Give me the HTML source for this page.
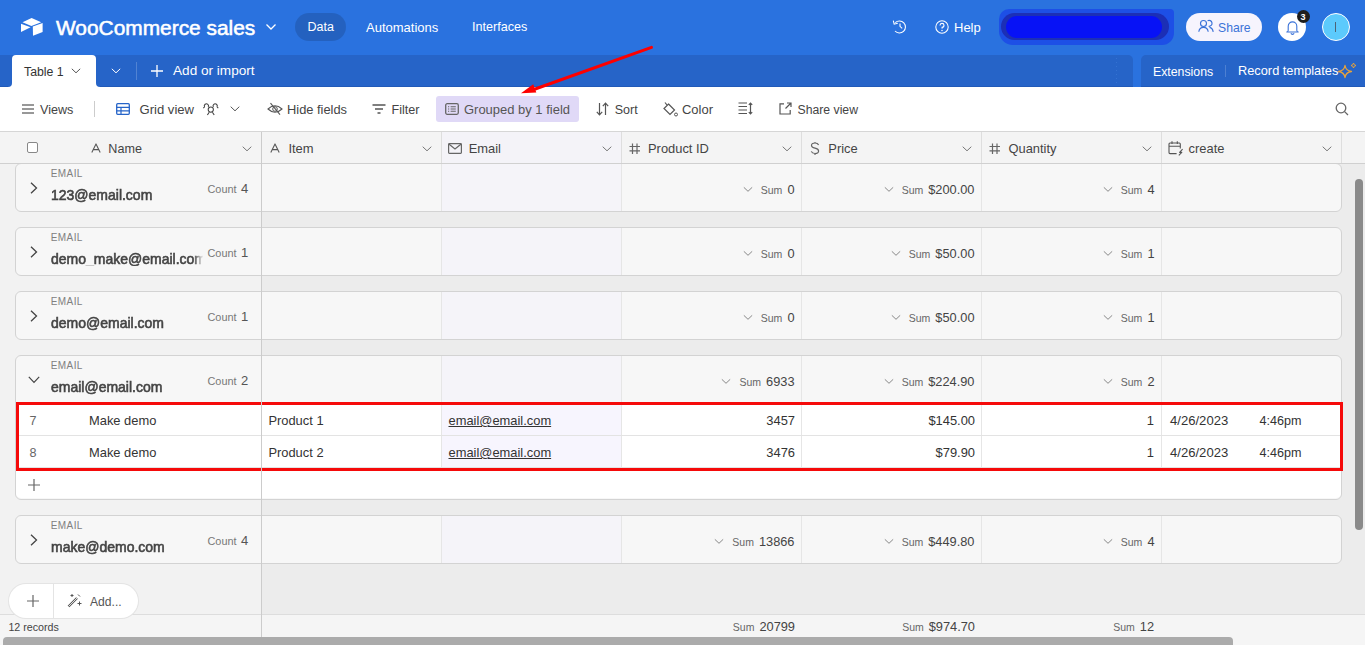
<!DOCTYPE html>
<html><head><meta charset="utf-8"><style>
html,body{margin:0;padding:0;}
body{width:1365px;height:645px;overflow:hidden;position:relative;font-family:"Liberation Sans", sans-serif;background:#fff;}
.t{position:absolute;line-height:1;white-space:nowrap;}
.b{position:absolute;}
.sum{display:flex;align-items:baseline;}
</style></head><body>
<div class="b" style="left:0px;top:0px;width:1365px;height:54px;background:#2a72df"></div>
<svg class="b" style="left:16px;top:12px;" width="32" height="28" viewBox="0 0 32 28"><path d="M6.5 10.2 L15.6 6 L25.2 10.2 L15.4 14 Z" fill="#fff"/><path d="M5 11.8 L14.6 15.3 L5 19.9 Z" fill="#fff"/><path d="M16.8 14.6 L26.6 11 L26.6 20 L17 23.8 Z" fill="#fff"/></svg>
<div class="t" style="left:56px;top:18.31px;font-size:20.9px;color:#fff;font-weight:normal;-webkit-text-stroke:0.55px #fff">WooCommerce sales</div>
<svg class="b" style="left:266px;top:24px;" width="10" height="6" viewBox="0 0 10 6"><path d="M0.5 0.5 L5 5 L9.5 0.5" stroke="#fff" stroke-width="1.3" fill="none"/></svg>
<div class="b" style="left:295px;top:13px;width:51px;height:28px;background:rgba(0,0,0,0.14);border-radius:14px"></div>
<div class="t" style="left:307.5px;top:21.42px;font-size:12.5px;color:#fff;font-weight:normal;">Data</div>
<div class="t" style="left:366px;top:21.00px;font-size:13px;color:#fff;font-weight:normal;">Automations</div>
<div class="t" style="left:472px;top:21.33px;font-size:12.6px;color:#fff;font-weight:normal;">Interfaces</div>
<svg class="b" style="left:890px;top:17px;" width="18" height="18" viewBox="0 0 18 18"><path d="M5.3 5.6 A6 6 0 1 1 5 14" stroke="#fff" stroke-width="1.1" fill="none"/><path d="M3.3 3.6 L4.2 7.2 L7.8 6.3" stroke="#fff" stroke-width="1.1" fill="none"/><path d="M10 6.5 L10 9.3 L12.2 11.3" stroke="#fff" stroke-width="1.1" fill="none"/></svg>
<svg class="b" style="left:934px;top:19px;" width="16" height="16" viewBox="0 0 16 16"><circle cx="8" cy="8" r="6.2" stroke="#fff" stroke-width="1.05" fill="none"/><path d="M6 6.4 A2 2 0 1 1 8.1 8.4 L8 9.6" stroke="#fff" stroke-width="1.1" fill="none"/><circle cx="8" cy="11.4" r="0.75" fill="#fff"/></svg>
<div class="t" style="left:954px;top:21.00px;font-size:13px;color:#fff;font-weight:normal;">Help</div>
<div class="b" style="left:999px;top:9px;width:175px;height:36px;background:#1d4fe6;border-radius:10px 4px 12px 14px"></div>
<div class="b" style="left:1001px;top:13px;width:168px;height:27px;background:#1c2fb6;border-radius:14px"></div>
<div class="b" style="left:1006px;top:15.5px;width:156px;height:22px;background:#0712f6;border-radius:11px"></div>
<div class="b" style="left:1186px;top:13px;width:76px;height:28px;background:#f6f4fd;border-radius:14px"></div>
<svg class="b" style="left:1198px;top:19px;" width="18" height="14" viewBox="0 0 18 14"><circle cx="5.5" cy="4.5" r="3" stroke="#3a72d8" stroke-width="1.15" fill="none"/><path d="M0.8 12.8 C1.2 9.6 3 8.3 5.5 8.3 C8 8.3 9.8 9.6 10.2 12.8" stroke="#3a72d8" stroke-width="1.15" fill="none"/><path d="M9.6 1.7 A3 3 0 1 1 10.6 7.3" stroke="#3a72d8" stroke-width="1.15" fill="none"/><path d="M11.5 8.4 C13.6 8.8 14.8 10.2 15.2 12.8" stroke="#3a72d8" stroke-width="1.15" fill="none"/></svg>
<div class="t" style="left:1218px;top:21.67px;font-size:12.2px;color:#3a72d8;font-weight:normal;">Share</div>
<div class="b" style="left:1278px;top:13px;width:28px;height:28px;background:#fff;border-radius:50%"></div>
<svg class="b" style="left:1286px;top:20px;" width="13" height="15" viewBox="0 0 13 15"><path d="M2.2 10.5 L2.2 6.2 A4.3 4.3 0 0 1 10.8 6.2 L10.8 10.5 Q11 11.5 12.2 12 L0.8 12 Q2 11.5 2.2 10.5 Z" stroke="#3a72d8" stroke-width="1.1" fill="none" stroke-linejoin="round"/><path d="M4.9 13.2 A1.7 1.7 0 0 0 8.1 13.2" stroke="#3a72d8" stroke-width="1.1" fill="none"/></svg>
<div class="b" style="left:1297px;top:10px;width:13px;height:13px;background:#1e1e1e;border-radius:50%"></div>
<div class="t" style="left:1300.5px;top:12.88px;font-size:9px;color:#fff;font-weight:bold;">3</div>
<div class="b" style="left:1322px;top:13px;width:28px;height:28px;background:#5ccafc;border-radius:50%;box-sizing:border-box;border:1px solid #fff"></div>
<div class="b" style="left:1335px;top:22px;width:1px;height:10px;background:#4d6375"></div>
<div class="b" style="left:0px;top:54px;width:1365px;height:1px;background:#2a72df"></div>
<div class="b" style="left:1110px;top:54px;width:50px;height:33px;background:#2a72df"></div>
<div class="b" style="left:0px;top:55px;width:1120px;height:20px;background:#2664c8"></div>
<div class="b" style="left:0px;top:55px;width:12px;height:32px;background:#2664c8;border-bottom-right-radius:4px"></div>
<div class="b" style="left:96px;top:55px;width:1037px;height:32px;background:#2664c8;border-top-right-radius:5px;border-bottom-left-radius:4px"></div>
<div class="b" style="left:1141px;top:55px;width:224px;height:32px;background:#2664c8;border-top-left-radius:5px"></div>
<div class="b" style="left:0px;top:86px;width:8px;height:1px;background:#215ab8"></div>
<div class="b" style="left:100px;top:86px;width:1033px;height:1px;background:#215ab8"></div>
<div class="b" style="left:1141px;top:86px;width:224px;height:1px;background:#215ab8"></div>
<div class="b" style="left:1116px;top:58px;width:1px;height:28px;background:repeating-linear-gradient(rgba(80,140,230,0.35) 0 1px, transparent 1px 4px)"></div>
<div class="b" style="left:12px;top:55px;width:84px;height:33px;background:#fff;border-top-left-radius:4px;border-top-right-radius:4px"></div>
<div class="t" style="left:24px;top:65.59px;font-size:12.3px;color:#333;font-weight:normal;">Table 1</div>
<svg class="b" style="left:71px;top:68px;" width="10" height="6" viewBox="0 0 10 6"><path d="M0.8 0.8 L5 4.8 L9.2 0.8" stroke="#555" stroke-width="1" fill="none"/></svg>
<svg class="b" style="left:111px;top:68px;" width="10" height="6" viewBox="0 0 10 6"><path d="M0.8 0.8 L5 4.8 L9.2 0.8" stroke="#fff" stroke-width="1" fill="none"/></svg>
<div class="b" style="left:136px;top:62px;width:1px;height:18px;background:rgba(255,255,255,0.2)"></div>
<svg class="b" style="left:151px;top:65px;" width="12" height="12" viewBox="0 0 12 12"><path d="M6 0 L6 12 M0 6 L12 6" stroke="#fff" stroke-width="1.3"/></svg>
<div class="t" style="left:173px;top:64.49px;font-size:13.6px;color:#fff;font-weight:normal;">Add or import</div>
<div class="t" style="left:1153px;top:65.59px;font-size:12.3px;color:#fff;font-weight:normal;">Extensions</div>
<div class="b" style="left:1225px;top:65px;width:1px;height:12px;background:rgba(255,255,255,0.18)"></div>
<div class="t" style="left:1238px;top:65.16px;font-size:12.8px;color:#fff;font-weight:normal;">Record templates</div>
<svg class="b" style="left:1336px;top:60px;" width="24" height="20" viewBox="0 0 24 20"><path d="M9 5.5 Q9.8 10.8 15.5 11.5 Q9.8 12.2 9 17.5 Q8.2 12.2 2.5 11.5 Q8.2 10.8 9 5.5 Z" stroke="#e8a33a" stroke-width="1.3" fill="none" stroke-linejoin="round"/><path d="M17.5 3 Q17.8 5.2 20 5.5 Q17.8 5.8 17.5 8 Q17.2 5.8 15 5.5 Q17.2 5.2 17.5 3 Z" stroke="#e8a33a" stroke-width="1" fill="none"/></svg>
<div class="b" style="left:0px;top:87px;width:1365px;height:44px;background:#fff"></div>
<div class="b" style="left:0px;top:131px;width:1365px;height:1px;background:#d6d6d6"></div>
<svg class="b" style="left:22px;top:103px;" width="12" height="12" viewBox="0 0 12 12"><path d="M0 2 L12 2 M0 6 L12 6 M0 10 L12 10" stroke="#777" stroke-width="1.5"/></svg>
<div class="t" style="left:40px;top:104.33px;font-size:12.6px;color:#444;font-weight:normal;">Views</div>
<div class="b" style="left:94px;top:101px;width:1px;height:16px;background:#ccc"></div>
<svg class="b" style="left:116px;top:103px;" width="14" height="12" viewBox="0 0 14 12"><rect x="0.7" y="0.7" width="12.6" height="10.6" rx="1" stroke="#2664c8" stroke-width="1.3" fill="none"/><path d="M0.7 4.3 L13.3 4.3 M0.7 7.8 L13.3 7.8 M5 4.3 L5 11.3" stroke="#2664c8" stroke-width="1.2"/></svg>
<div class="t" style="left:139.5px;top:103.31px;font-size:13.1px;color:#444;font-weight:normal;">Grid view</div>
<svg class="b" style="left:202px;top:102px;" width="18" height="15" viewBox="0 0 18 15"><circle cx="8.8" cy="7.6" r="2.6" stroke="#444" stroke-width="1.05" fill="none"/><path d="M7.2 10.3 L5.4 13 M10.4 10.3 L12.2 13" stroke="#444" stroke-width="1.1"/><path d="M2.6 4.9 A2.1 2.1 0 1 1 6.2 5 M2.6 4.9 L1.3 6.1 M11.4 5 A2.1 2.1 0 1 1 15 4.9 M15 4.9 L16.3 6.1" stroke="#444" stroke-width="1.05" fill="none"/></svg>
<svg class="b" style="left:230px;top:106px;" width="10" height="6" viewBox="0 0 10 6"><path d="M0.7 0.7 L5 4.8 L9.3 0.7" stroke="#555" stroke-width="1" fill="none"/></svg>
<svg class="b" style="left:267px;top:102px;" width="16" height="14" viewBox="0 0 16 14"><path d="M1 7 Q8 0.5 15 7 Q8 13.5 1 7 Z" stroke="#555" stroke-width="1.05" fill="none"/><circle cx="8" cy="7" r="2.3" stroke="#555" stroke-width="1" fill="none"/><path d="M3.5 1.2 L13 12.6" stroke="#555" stroke-width="1.1"/></svg>
<div class="t" style="left:287px;top:104.12px;font-size:12.85px;color:#444;font-weight:normal;">Hide fields</div>
<svg class="b" style="left:372px;top:104px;" width="14" height="10" viewBox="0 0 14 10"><path d="M0.5 1 L13.5 1 M3 5 L11 5 M5.5 9 L8.5 9" stroke="#555" stroke-width="1.3"/></svg>
<div class="t" style="left:391.5px;top:104.33px;font-size:12.6px;color:#444;font-weight:normal;">Filter</div>
<div class="b" style="left:436px;top:96px;width:143px;height:26px;background:#e0d9f7;border-radius:3px"></div>
<svg class="b" style="left:445px;top:103px;" width="14" height="12" viewBox="0 0 14 12"><rect x="0.7" y="0.7" width="12.6" height="10.6" rx="1.5" stroke="#666" stroke-width="1.3" fill="none"/><path d="M3 3.8 L4.2 3.8 M5.6 3.8 L10.8 3.8 M3 6 L4.2 6 M5.6 6 L10.8 6 M3 8.2 L4.2 8.2 M5.6 8.2 L10.8 8.2" stroke="#666" stroke-width="1.05"/></svg>
<div class="t" style="left:464px;top:104.02px;font-size:12.97px;color:#555;font-weight:normal;">Grouped by 1 field</div>
<svg class="b" style="left:596px;top:102px;" width="13" height="14" viewBox="0 0 13 14"><path d="M3.5 1 L3.5 12.5 M0.8 9.8 L3.5 12.8 L6.2 9.8 M9.5 13 L9.5 1.5 M6.8 4.2 L9.5 1.2 L12.2 4.2" stroke="#555" stroke-width="1.2" fill="none"/></svg>
<div class="t" style="left:614.7px;top:104.38px;font-size:12.54px;color:#444;font-weight:normal;">Sort</div>
<svg class="b" style="left:662px;top:101px;" width="16" height="16" viewBox="0 0 16 16"><path d="M3 1.5 L5 4" stroke="#555" stroke-width="1.2"/><path d="M6.5 3 L12.5 9 L8 13.5 L2 7.5 Z" stroke="#555" stroke-width="1.2" fill="none"/><circle cx="14" cy="13.5" r="1.5" stroke="#555" stroke-width="1" fill="none"/></svg>
<div class="t" style="left:682px;top:104.02px;font-size:12.97px;color:#444;font-weight:normal;">Color</div>
<svg class="b" style="left:738px;top:102px;" width="15" height="13" viewBox="0 0 15 13"><path d="M0.5 1 L9 1 M0.5 4.5 L9 4.5 M0.5 8 L9 8 M0.5 11.5 L9 11.5 M12.5 1 L12.5 12 M10.8 2.8 L12.5 1 L14.2 2.8 M10.8 10.2 L12.5 12 L14.2 10.2" stroke="#555" stroke-width="1.2" fill="none"/></svg>
<svg class="b" style="left:779px;top:102px;" width="13" height="13" viewBox="0 0 13 13"><path d="M5 1.8 L1 1.8 L1 12 L11.2 12 L11.2 8" stroke="#555" stroke-width="1.2" fill="none"/><path d="M6.5 6.5 L12 1 M8 1 L12 1 L12 5" stroke="#555" stroke-width="1.2" fill="none"/></svg>
<div class="t" style="left:797.6px;top:104.06px;font-size:12.21px;color:#444;font-weight:normal;">Share view</div>
<svg class="b" style="left:1335px;top:102px;" width="14" height="14" viewBox="0 0 14 14"><circle cx="6" cy="6" r="4.8" stroke="#666" stroke-width="1.3" fill="none"/><path d="M9.6 9.6 L13 13" stroke="#666" stroke-width="1.3"/></svg>
<div class="b" style="left:0px;top:132px;width:1365px;height:513px;background:#ececec"></div>
<div class="b" style="left:0px;top:132px;width:261px;height:513px;background:#f2f2f2"></div>
<div class="b" style="left:15px;top:163px;width:1327px;height:49px;background:#f7f7f7;border:1px solid #d3d3d3;border-radius:6px;box-sizing:border-box"></div>
<div class="b" style="left:442px;top:164px;width:179px;height:47px;background:#f5f4f9"></div>
<div class="b" style="left:441px;top:164px;width:1px;height:47px;background:#e6e6e6"></div>
<div class="b" style="left:621px;top:164px;width:1px;height:47px;background:#e6e6e6"></div>
<div class="b" style="left:801px;top:164px;width:1px;height:47px;background:#e6e6e6"></div>
<div class="b" style="left:981px;top:164px;width:1px;height:47px;background:#e6e6e6"></div>
<div class="b" style="left:1161px;top:164px;width:1px;height:47px;background:#e6e6e6"></div>
<svg class="b" style="left:30px;top:182px;" width="8" height="12" viewBox="0 0 8 12"><path d="M1 0.8 L6.5 6 L1 11.2" stroke="#444" stroke-width="1.3" fill="none"/></svg>
<div class="t" style="left:50.8px;top:169.13px;font-size:10px;color:#808080;font-weight:normal;letter-spacing:0.4px">EMAIL</div>
<div class="t" style="left:51px;top:187.53px;font-size:14.5px;color:#444;font-weight:normal;-webkit-text-stroke:0.6px #444;transform:scaleX(0.965);transform-origin:0 0">123@email.com</div>
<div class="t" style="left:207.5px;top:183.77px;font-size:10.9px;color:#777;font-weight:normal;">Count</div>
<div class="t" style="left:241px;top:182.20px;font-size:13px;color:#555;font-weight:normal;">4</div>
<div class="t sum" style="right:570.5px;top:183.80px"><svg width="10" height="6" viewBox="0 0 10 6" style="margin-right:8px;transform:translateY(-1.5px)"><path d="M0.8 0.8 L5 4.8 L9.2 0.8" stroke="#888" stroke-width="1" fill="none"/></svg><span style="font-size:10.5px;color:#666;margin-right:5px">Sum</span><span style="font-size:12.8px;color:#444">0</span></div>
<div class="t sum" style="right:390.5px;top:183.80px"><svg width="10" height="6" viewBox="0 0 10 6" style="margin-right:8px;transform:translateY(-1.5px)"><path d="M0.8 0.8 L5 4.8 L9.2 0.8" stroke="#888" stroke-width="1" fill="none"/></svg><span style="font-size:10.5px;color:#666;margin-right:5px">Sum</span><span style="font-size:12.8px;color:#444">$200.00</span></div>
<div class="t sum" style="right:210.5px;top:183.80px"><svg width="10" height="6" viewBox="0 0 10 6" style="margin-right:8px;transform:translateY(-1.5px)"><path d="M0.8 0.8 L5 4.8 L9.2 0.8" stroke="#888" stroke-width="1" fill="none"/></svg><span style="font-size:10.5px;color:#666;margin-right:5px">Sum</span><span style="font-size:12.8px;color:#444">4</span></div>
<div class="b" style="left:15px;top:227px;width:1327px;height:49px;background:#f7f7f7;border:1px solid #d3d3d3;border-radius:6px;box-sizing:border-box"></div>
<div class="b" style="left:442px;top:228px;width:179px;height:47px;background:#f5f4f9"></div>
<div class="b" style="left:441px;top:228px;width:1px;height:47px;background:#e6e6e6"></div>
<div class="b" style="left:621px;top:228px;width:1px;height:47px;background:#e6e6e6"></div>
<div class="b" style="left:801px;top:228px;width:1px;height:47px;background:#e6e6e6"></div>
<div class="b" style="left:981px;top:228px;width:1px;height:47px;background:#e6e6e6"></div>
<div class="b" style="left:1161px;top:228px;width:1px;height:47px;background:#e6e6e6"></div>
<svg class="b" style="left:30px;top:246px;" width="8" height="12" viewBox="0 0 8 12"><path d="M1 0.8 L6.5 6 L1 11.2" stroke="#444" stroke-width="1.3" fill="none"/></svg>
<div class="t" style="left:50.8px;top:233.13px;font-size:10px;color:#808080;font-weight:normal;letter-spacing:0.4px">EMAIL</div>
<div class="t" style="left:51px;top:251.53px;font-size:14.5px;color:#444;font-weight:normal;-webkit-text-stroke:0.6px #444;overflow:hidden;width:158px;transform:scaleX(0.965);transform-origin:0 0;-webkit-mask-image:linear-gradient(90deg,#000 calc(100% - 10px),transparent)">demo_make@email.com</div>
<div class="t" style="left:207.5px;top:247.77px;font-size:10.9px;color:#777;font-weight:normal;">Count</div>
<div class="t" style="left:241px;top:246.20px;font-size:13px;color:#555;font-weight:normal;">1</div>
<div class="t sum" style="right:570.5px;top:247.80px"><svg width="10" height="6" viewBox="0 0 10 6" style="margin-right:8px;transform:translateY(-1.5px)"><path d="M0.8 0.8 L5 4.8 L9.2 0.8" stroke="#888" stroke-width="1" fill="none"/></svg><span style="font-size:10.5px;color:#666;margin-right:5px">Sum</span><span style="font-size:12.8px;color:#444">0</span></div>
<div class="t sum" style="right:390.5px;top:247.80px"><svg width="10" height="6" viewBox="0 0 10 6" style="margin-right:8px;transform:translateY(-1.5px)"><path d="M0.8 0.8 L5 4.8 L9.2 0.8" stroke="#888" stroke-width="1" fill="none"/></svg><span style="font-size:10.5px;color:#666;margin-right:5px">Sum</span><span style="font-size:12.8px;color:#444">$50.00</span></div>
<div class="t sum" style="right:210.5px;top:247.80px"><svg width="10" height="6" viewBox="0 0 10 6" style="margin-right:8px;transform:translateY(-1.5px)"><path d="M0.8 0.8 L5 4.8 L9.2 0.8" stroke="#888" stroke-width="1" fill="none"/></svg><span style="font-size:10.5px;color:#666;margin-right:5px">Sum</span><span style="font-size:12.8px;color:#444">1</span></div>
<div class="b" style="left:15px;top:291px;width:1327px;height:49px;background:#f7f7f7;border:1px solid #d3d3d3;border-radius:6px;box-sizing:border-box"></div>
<div class="b" style="left:442px;top:292px;width:179px;height:47px;background:#f5f4f9"></div>
<div class="b" style="left:441px;top:292px;width:1px;height:47px;background:#e6e6e6"></div>
<div class="b" style="left:621px;top:292px;width:1px;height:47px;background:#e6e6e6"></div>
<div class="b" style="left:801px;top:292px;width:1px;height:47px;background:#e6e6e6"></div>
<div class="b" style="left:981px;top:292px;width:1px;height:47px;background:#e6e6e6"></div>
<div class="b" style="left:1161px;top:292px;width:1px;height:47px;background:#e6e6e6"></div>
<svg class="b" style="left:30px;top:310px;" width="8" height="12" viewBox="0 0 8 12"><path d="M1 0.8 L6.5 6 L1 11.2" stroke="#444" stroke-width="1.3" fill="none"/></svg>
<div class="t" style="left:50.8px;top:297.14px;font-size:10px;color:#808080;font-weight:normal;letter-spacing:0.4px">EMAIL</div>
<div class="t" style="left:51px;top:315.53px;font-size:14.5px;color:#444;font-weight:normal;-webkit-text-stroke:0.6px #444;transform:scaleX(0.965);transform-origin:0 0">demo@email.com</div>
<div class="t" style="left:207.5px;top:311.77px;font-size:10.9px;color:#777;font-weight:normal;">Count</div>
<div class="t" style="left:241px;top:310.20px;font-size:13px;color:#555;font-weight:normal;">1</div>
<div class="t sum" style="right:570.5px;top:311.80px"><svg width="10" height="6" viewBox="0 0 10 6" style="margin-right:8px;transform:translateY(-1.5px)"><path d="M0.8 0.8 L5 4.8 L9.2 0.8" stroke="#888" stroke-width="1" fill="none"/></svg><span style="font-size:10.5px;color:#666;margin-right:5px">Sum</span><span style="font-size:12.8px;color:#444">0</span></div>
<div class="t sum" style="right:390.5px;top:311.80px"><svg width="10" height="6" viewBox="0 0 10 6" style="margin-right:8px;transform:translateY(-1.5px)"><path d="M0.8 0.8 L5 4.8 L9.2 0.8" stroke="#888" stroke-width="1" fill="none"/></svg><span style="font-size:10.5px;color:#666;margin-right:5px">Sum</span><span style="font-size:12.8px;color:#444">$50.00</span></div>
<div class="t sum" style="right:210.5px;top:311.80px"><svg width="10" height="6" viewBox="0 0 10 6" style="margin-right:8px;transform:translateY(-1.5px)"><path d="M0.8 0.8 L5 4.8 L9.2 0.8" stroke="#888" stroke-width="1" fill="none"/></svg><span style="font-size:10.5px;color:#666;margin-right:5px">Sum</span><span style="font-size:12.8px;color:#444">1</span></div>
<div class="b" style="left:15px;top:355px;width:1327px;height:145px;background:#f7f7f7;border:1px solid #d3d3d3;border-radius:6px;box-sizing:border-box"></div>
<div class="b" style="left:442px;top:356px;width:179px;height:47px;background:#f5f4f9"></div>
<div class="b" style="left:441px;top:356px;width:1px;height:47px;background:#e6e6e6"></div>
<div class="b" style="left:621px;top:356px;width:1px;height:47px;background:#e6e6e6"></div>
<div class="b" style="left:801px;top:356px;width:1px;height:47px;background:#e6e6e6"></div>
<div class="b" style="left:981px;top:356px;width:1px;height:47px;background:#e6e6e6"></div>
<div class="b" style="left:1161px;top:356px;width:1px;height:47px;background:#e6e6e6"></div>
<svg class="b" style="left:28px;top:376px;" width="12" height="8" viewBox="0 0 12 8"><path d="M0.8 0.8 L6 6.3 L11.2 0.8" stroke="#444" stroke-width="1.2" fill="none"/></svg>
<div class="t" style="left:50.8px;top:361.14px;font-size:10px;color:#808080;font-weight:normal;letter-spacing:0.4px">EMAIL</div>
<div class="t" style="left:51px;top:379.53px;font-size:14.5px;color:#444;font-weight:normal;-webkit-text-stroke:0.6px #444;transform:scaleX(0.965);transform-origin:0 0">email@email.com</div>
<div class="t" style="left:207.5px;top:375.77px;font-size:10.9px;color:#777;font-weight:normal;">Count</div>
<div class="t" style="left:241px;top:374.20px;font-size:13px;color:#555;font-weight:normal;">2</div>
<div class="t sum" style="right:570.5px;top:375.80px"><svg width="10" height="6" viewBox="0 0 10 6" style="margin-right:8px;transform:translateY(-1.5px)"><path d="M0.8 0.8 L5 4.8 L9.2 0.8" stroke="#888" stroke-width="1" fill="none"/></svg><span style="font-size:10.5px;color:#666;margin-right:5px">Sum</span><span style="font-size:12.8px;color:#444">6933</span></div>
<div class="t sum" style="right:390.5px;top:375.80px"><svg width="10" height="6" viewBox="0 0 10 6" style="margin-right:8px;transform:translateY(-1.5px)"><path d="M0.8 0.8 L5 4.8 L9.2 0.8" stroke="#888" stroke-width="1" fill="none"/></svg><span style="font-size:10.5px;color:#666;margin-right:5px">Sum</span><span style="font-size:12.8px;color:#444">$224.90</span></div>
<div class="t sum" style="right:210.5px;top:375.80px"><svg width="10" height="6" viewBox="0 0 10 6" style="margin-right:8px;transform:translateY(-1.5px)"><path d="M0.8 0.8 L5 4.8 L9.2 0.8" stroke="#888" stroke-width="1" fill="none"/></svg><span style="font-size:10.5px;color:#666;margin-right:5px">Sum</span><span style="font-size:12.8px;color:#444">2</span></div>
<div class="b" style="left:15px;top:515px;width:1327px;height:49px;background:#f7f7f7;border:1px solid #d3d3d3;border-radius:6px;box-sizing:border-box"></div>
<div class="b" style="left:442px;top:516px;width:179px;height:47px;background:#f5f4f9"></div>
<div class="b" style="left:441px;top:516px;width:1px;height:47px;background:#e6e6e6"></div>
<div class="b" style="left:621px;top:516px;width:1px;height:47px;background:#e6e6e6"></div>
<div class="b" style="left:801px;top:516px;width:1px;height:47px;background:#e6e6e6"></div>
<div class="b" style="left:981px;top:516px;width:1px;height:47px;background:#e6e6e6"></div>
<div class="b" style="left:1161px;top:516px;width:1px;height:47px;background:#e6e6e6"></div>
<svg class="b" style="left:30px;top:534px;" width="8" height="12" viewBox="0 0 8 12"><path d="M1 0.8 L6.5 6 L1 11.2" stroke="#444" stroke-width="1.3" fill="none"/></svg>
<div class="t" style="left:50.8px;top:521.13px;font-size:10px;color:#808080;font-weight:normal;letter-spacing:0.4px">EMAIL</div>
<div class="t" style="left:51px;top:539.53px;font-size:14.5px;color:#444;font-weight:normal;-webkit-text-stroke:0.6px #444;transform:scaleX(0.965);transform-origin:0 0">make@demo.com</div>
<div class="t" style="left:207.5px;top:535.77px;font-size:10.9px;color:#777;font-weight:normal;">Count</div>
<div class="t" style="left:241px;top:534.20px;font-size:13px;color:#555;font-weight:normal;">4</div>
<div class="t sum" style="right:570.5px;top:535.80px"><svg width="10" height="6" viewBox="0 0 10 6" style="margin-right:8px;transform:translateY(-1.5px)"><path d="M0.8 0.8 L5 4.8 L9.2 0.8" stroke="#888" stroke-width="1" fill="none"/></svg><span style="font-size:10.5px;color:#666;margin-right:5px">Sum</span><span style="font-size:12.8px;color:#444">13866</span></div>
<div class="t sum" style="right:390.5px;top:535.80px"><svg width="10" height="6" viewBox="0 0 10 6" style="margin-right:8px;transform:translateY(-1.5px)"><path d="M0.8 0.8 L5 4.8 L9.2 0.8" stroke="#888" stroke-width="1" fill="none"/></svg><span style="font-size:10.5px;color:#666;margin-right:5px">Sum</span><span style="font-size:12.8px;color:#444">$449.80</span></div>
<div class="t sum" style="right:210.5px;top:535.80px"><svg width="10" height="6" viewBox="0 0 10 6" style="margin-right:8px;transform:translateY(-1.5px)"><path d="M0.8 0.8 L5 4.8 L9.2 0.8" stroke="#888" stroke-width="1" fill="none"/></svg><span style="font-size:10.5px;color:#666;margin-right:5px">Sum</span><span style="font-size:12.8px;color:#444">4</span></div>
<div class="b" style="left:16px;top:403px;width:1325px;height:95px;background:#fff;border-bottom-left-radius:5px;border-bottom-right-radius:5px"></div>
<div class="b" style="left:442px;top:403px;width:179px;height:64px;background:#f7f5fe"></div>
<div class="b" style="left:441px;top:403px;width:1px;height:64px;background:#e6e6e6"></div>
<div class="b" style="left:621px;top:403px;width:1px;height:64px;background:#e6e6e6"></div>
<div class="b" style="left:801px;top:403px;width:1px;height:64px;background:#e6e6e6"></div>
<div class="b" style="left:981px;top:403px;width:1px;height:64px;background:#e6e6e6"></div>
<div class="b" style="left:1161px;top:403px;width:1px;height:64px;background:#e6e6e6"></div>
<div class="b" style="left:16px;top:435px;width:1325px;height:1px;background:#e3e3e3"></div>
<div class="b" style="left:16px;top:467px;width:1325px;height:1px;background:#e3e3e3"></div>
<div class="t" style="left:29.5px;top:415.33px;font-size:12.6px;color:#666;font-weight:normal;">7</div>
<div class="t" style="left:89px;top:415.08px;font-size:12.9px;color:#333;font-weight:normal;">Make demo</div>
<div class="t" style="left:268.4px;top:415.08px;font-size:12.9px;color:#333;font-weight:normal;">Product 1</div>
<div class="t" style="left:448.5px;top:415.08px;font-size:12.9px;color:#333;font-weight:normal;text-decoration:underline">email@email.com</div>
<div class="t" style="right:570px;top:415.08px;font-size:12.9px;color:#333;font-weight:normal;">3457</div>
<div class="t" style="right:390px;top:415.08px;font-size:12.9px;color:#333;font-weight:normal;">$145.00</div>
<div class="t" style="right:211px;top:415.08px;font-size:12.9px;color:#333;font-weight:normal;">1</div>
<div class="t" style="left:1170px;top:414.31px;font-size:13.1px;color:#333;font-weight:normal;">4/26/2023</div>
<div class="t" style="left:1259.5px;top:415.33px;font-size:12.6px;color:#333;font-weight:normal;">4:46pm</div>
<div class="t" style="left:29.5px;top:447.33px;font-size:12.6px;color:#666;font-weight:normal;">8</div>
<div class="t" style="left:89px;top:447.08px;font-size:12.9px;color:#333;font-weight:normal;">Make demo</div>
<div class="t" style="left:268.4px;top:447.08px;font-size:12.9px;color:#333;font-weight:normal;">Product 2</div>
<div class="t" style="left:448.5px;top:447.08px;font-size:12.9px;color:#333;font-weight:normal;text-decoration:underline">email@email.com</div>
<div class="t" style="right:570px;top:447.08px;font-size:12.9px;color:#333;font-weight:normal;">3476</div>
<div class="t" style="right:390px;top:447.08px;font-size:12.9px;color:#333;font-weight:normal;">$79.90</div>
<div class="t" style="right:211px;top:447.08px;font-size:12.9px;color:#333;font-weight:normal;">1</div>
<div class="t" style="left:1170px;top:446.31px;font-size:13.1px;color:#333;font-weight:normal;">4/26/2023</div>
<div class="t" style="left:1259.5px;top:447.33px;font-size:12.6px;color:#333;font-weight:normal;">4:46pm</div>
<svg class="b" style="left:28px;top:479px;" width="12" height="12" viewBox="0 0 12 12"><path d="M6 0 L6 12 M0 6 L12 6" stroke="#666" stroke-width="1.2"/></svg>
<div class="b" style="left:16px;top:402px;width:1327px;height:69px;border:3px solid #f50a0a;box-sizing:border-box"></div>
<div class="b" style="left:0px;top:132px;width:1342px;height:31px;background:#f4f4f4"></div>
<div class="b" style="left:1342px;top:132px;width:23px;height:31px;background:#f4f4f4"></div>
<div class="b" style="left:442px;top:132px;width:179px;height:31px;background:#f4f3f8"></div>
<div class="b" style="left:0px;top:163px;width:1342px;height:1px;background:#d0d0d0"></div>
<div class="b" style="left:1342px;top:163px;width:23px;height:1px;background:#d0d0d0"></div>
<div class="b" style="left:441px;top:132px;width:1px;height:31px;background:#dedede"></div>
<div class="b" style="left:621px;top:132px;width:1px;height:31px;background:#dedede"></div>
<div class="b" style="left:801px;top:132px;width:1px;height:31px;background:#dedede"></div>
<div class="b" style="left:981px;top:132px;width:1px;height:31px;background:#dedede"></div>
<div class="b" style="left:1161px;top:132px;width:1px;height:31px;background:#dedede"></div>
<div class="b" style="left:1341px;top:132px;width:1px;height:31px;background:#dedede"></div>
<div class="b" style="left:261px;top:132px;width:1px;height:513px;background:#cccccc"></div>
<div class="b" style="left:27px;top:142px;width:11px;height:11px;border:1px solid #888;border-radius:2px;box-sizing:border-box;background:#fff"></div>
<svg class="b" style="left:91px;top:143px;" width="10" height="11" viewBox="0 0 10 11"><path d="M0.8 9.4 L5 0.9 L9.2 9.4 M2.3 6.6 L7.7 6.6" stroke="#555" stroke-width="1.05" fill="none" stroke-linejoin="round"/></svg>
<div class="t" style="left:108.3px;top:143.33px;font-size:12.6px;color:#444;font-weight:normal;">Name</div>
<svg class="b" style="left:242px;top:146px;" width="10" height="6" viewBox="0 0 10 6"><path d="M0.7 0.7 L5.0 4.8 L9.3 0.7" stroke="#777" stroke-width="1.0" fill="none"/></svg>
<svg class="b" style="left:270px;top:143px;" width="10" height="11" viewBox="0 0 10 11"><path d="M0.8 9.4 L5 0.9 L9.2 9.4 M2.3 6.6 L7.7 6.6" stroke="#555" stroke-width="1.05" fill="none" stroke-linejoin="round"/></svg>
<div class="t" style="left:288.4px;top:143.03px;font-size:12.96px;color:#444;font-weight:normal;">Item</div>
<svg class="b" style="left:422px;top:146px;" width="10" height="6" viewBox="0 0 10 6"><path d="M0.7 0.7 L5.0 4.8 L9.3 0.7" stroke="#777" stroke-width="1.0" fill="none"/></svg>
<svg class="b" style="left:448px;top:143px;" width="14" height="11" viewBox="0 0 14 11"><rect x="0.6" y="0.6" width="12.8" height="9.8" rx="0.8" stroke="#666" stroke-width="1.2" fill="none"/><path d="M0.8 1 L7 6 L13.2 1" stroke="#666" stroke-width="1.2" fill="none"/></svg>
<div class="t" style="left:468.7px;top:143.08px;font-size:12.9px;color:#444;font-weight:normal;">Email</div>
<svg class="b" style="left:602px;top:146px;" width="10" height="6" viewBox="0 0 10 6"><path d="M0.7 0.7 L5.0 4.8 L9.3 0.7" stroke="#777" stroke-width="1.0" fill="none"/></svg>
<svg class="b" style="left:629px;top:143px;" width="12" height="11" viewBox="0 0 12 11"><path d="M3.5 0.5 L3.5 11 M8 0.5 L8 11 M0.5 3.5 L11 3.5 M0.5 7.8 L11 7.8" stroke="#666" stroke-width="1.2" fill="none"/></svg>
<div class="t" style="left:648px;top:143.08px;font-size:12.9px;color:#444;font-weight:normal;">Product ID</div>
<svg class="b" style="left:782px;top:146px;" width="10" height="6" viewBox="0 0 10 6"><path d="M0.7 0.7 L5.0 4.8 L9.3 0.7" stroke="#777" stroke-width="1.0" fill="none"/></svg>
<svg class="b" style="left:810px;top:142px;" width="10" height="13" viewBox="0 0 10 13"><path d="M8.6 3 C8 1.5 7 1 5 1 C2.8 1 1.5 2 1.5 3.5 C1.5 5 2.8 5.7 5 6.2 C7.3 6.7 8.6 7.4 8.6 9 C8.6 10.6 7.2 11.5 5 11.5 C3 11.5 1.8 10.8 1.3 9.4 M5 0 L5 1 M5 11.5 L5 13" stroke="#666" stroke-width="1.2" fill="none"/></svg>
<div class="t" style="left:828.3px;top:143.08px;font-size:12.9px;color:#444;font-weight:normal;">Price</div>
<svg class="b" style="left:962px;top:146px;" width="10" height="6" viewBox="0 0 10 6"><path d="M0.7 0.7 L5.0 4.8 L9.3 0.7" stroke="#777" stroke-width="1.0" fill="none"/></svg>
<svg class="b" style="left:989px;top:143px;" width="12" height="11" viewBox="0 0 12 11"><path d="M3.5 0.5 L3.5 11 M8 0.5 L8 11 M0.5 3.5 L11 3.5 M0.5 7.8 L11 7.8" stroke="#666" stroke-width="1.2" fill="none"/></svg>
<div class="t" style="left:1008.5px;top:143.08px;font-size:12.9px;color:#444;font-weight:normal;">Quantity</div>
<svg class="b" style="left:1142px;top:146px;" width="10" height="6" viewBox="0 0 10 6"><path d="M0.7 0.7 L5.0 4.8 L9.3 0.7" stroke="#777" stroke-width="1.0" fill="none"/></svg>
<svg class="b" style="left:1168px;top:140px;" width="16" height="16" viewBox="0 0 16 16"><path d="M12.3 8.5 L12.3 4 Q12.3 3 11.3 3 L2 3 Q1 3 1 4 L1 12.6 Q1 13.6 2 13.6 L8.6 13.6" stroke="#555" stroke-width="1.1" fill="none"/><path d="M1 6.2 L12.3 6.2 M4 1.2 L4 4 M9.3 1.2 L9.3 4" stroke="#555" stroke-width="1.1"/><path d="M14.6 9.2 L11.6 12.4 L13.8 12.4 L10.8 15.4" stroke="#555" stroke-width="1.1" fill="none" stroke-linejoin="round"/></svg>
<div class="t" style="left:1188.6px;top:143.08px;font-size:12.9px;color:#444;font-weight:normal;">create</div>
<svg class="b" style="left:1322px;top:146px;" width="10" height="6" viewBox="0 0 10 6"><path d="M0.7 0.7 L5.0 4.8 L9.3 0.7" stroke="#777" stroke-width="1.0" fill="none"/></svg>
<div class="b" style="left:0px;top:614px;width:1365px;height:31px;background:#f5f5f5"></div>
<div class="b" style="left:0px;top:614px;width:1365px;height:1px;background:#dddddd"></div>
<div class="b" style="left:261px;top:614px;width:1px;height:31px;background:#cccccc"></div>
<div class="t" style="left:8.4px;top:621.94px;font-size:10.7px;color:#444;font-weight:normal;">12 records</div>
<div class="t sum" style="right:570px;top:621.16px"><span style="font-size:10.5px;color:#666;margin-right:5px">Sum</span><span style="font-size:12.8px;color:#444">20799</span></div>
<div class="t sum" style="right:390px;top:621.16px"><span style="font-size:10.5px;color:#666;margin-right:5px">Sum</span><span style="font-size:12.8px;color:#444">$974.70</span></div>
<div class="t sum" style="right:211px;top:621.16px"><span style="font-size:10.5px;color:#666;margin-right:5px">Sum</span><span style="font-size:12.8px;color:#444">12</span></div>
<div class="b" style="left:9px;top:584px;width:129px;height:34px;background:#fff;border-radius:17px;box-shadow:0 0 0 1px #e4e4e4"></div>
<div class="b" style="left:53px;top:584px;width:1px;height:34px;background:#e4e4e4"></div>
<svg class="b" style="left:27px;top:595px;" width="12" height="12" viewBox="0 0 12 12"><path d="M6 0 L6 12 M0 6 L12 6" stroke="#666" stroke-width="1.2"/></svg>
<svg class="b" style="left:67px;top:593px;" width="15" height="15" viewBox="0 0 15 15"><path d="M1.5 13.5 L10 5" stroke="#555" stroke-width="2.4"/><path d="M1.5 13.5 L10 5" stroke="#fff" stroke-width="0.8"/><path d="M5 1 L5 4 M3.5 2.5 L6.5 2.5 M12.5 8.5 L12.5 12.5 M10.5 10.5 L14.5 10.5 M11 1.5 L13 3.5" stroke="#555" stroke-width="1"/></svg>
<div class="t" style="left:90px;top:595.76px;font-size:12.1px;color:#555;font-weight:normal;">Add...</div>
<div class="b" style="left:3px;top:637px;width:1230px;height:8px;background:#ababab;border-radius:4px 4px 0 0"></div>
<div class="b" style="left:1355px;top:179px;width:8px;height:351px;background:#8a8a8a;border-radius:4px"></div>
<svg class="b" style="left:500px;top:30px;" width="170" height="80" viewBox="0 0 170 80"><path d="M151.5 17.4 L31 60.5" stroke="#fe0000" stroke-width="3" stroke-linecap="round"/><path d="M21 63.3 L33.2 54.3 L36.3 62.6 Z" fill="#fe0000"/></svg>
</body></html>
